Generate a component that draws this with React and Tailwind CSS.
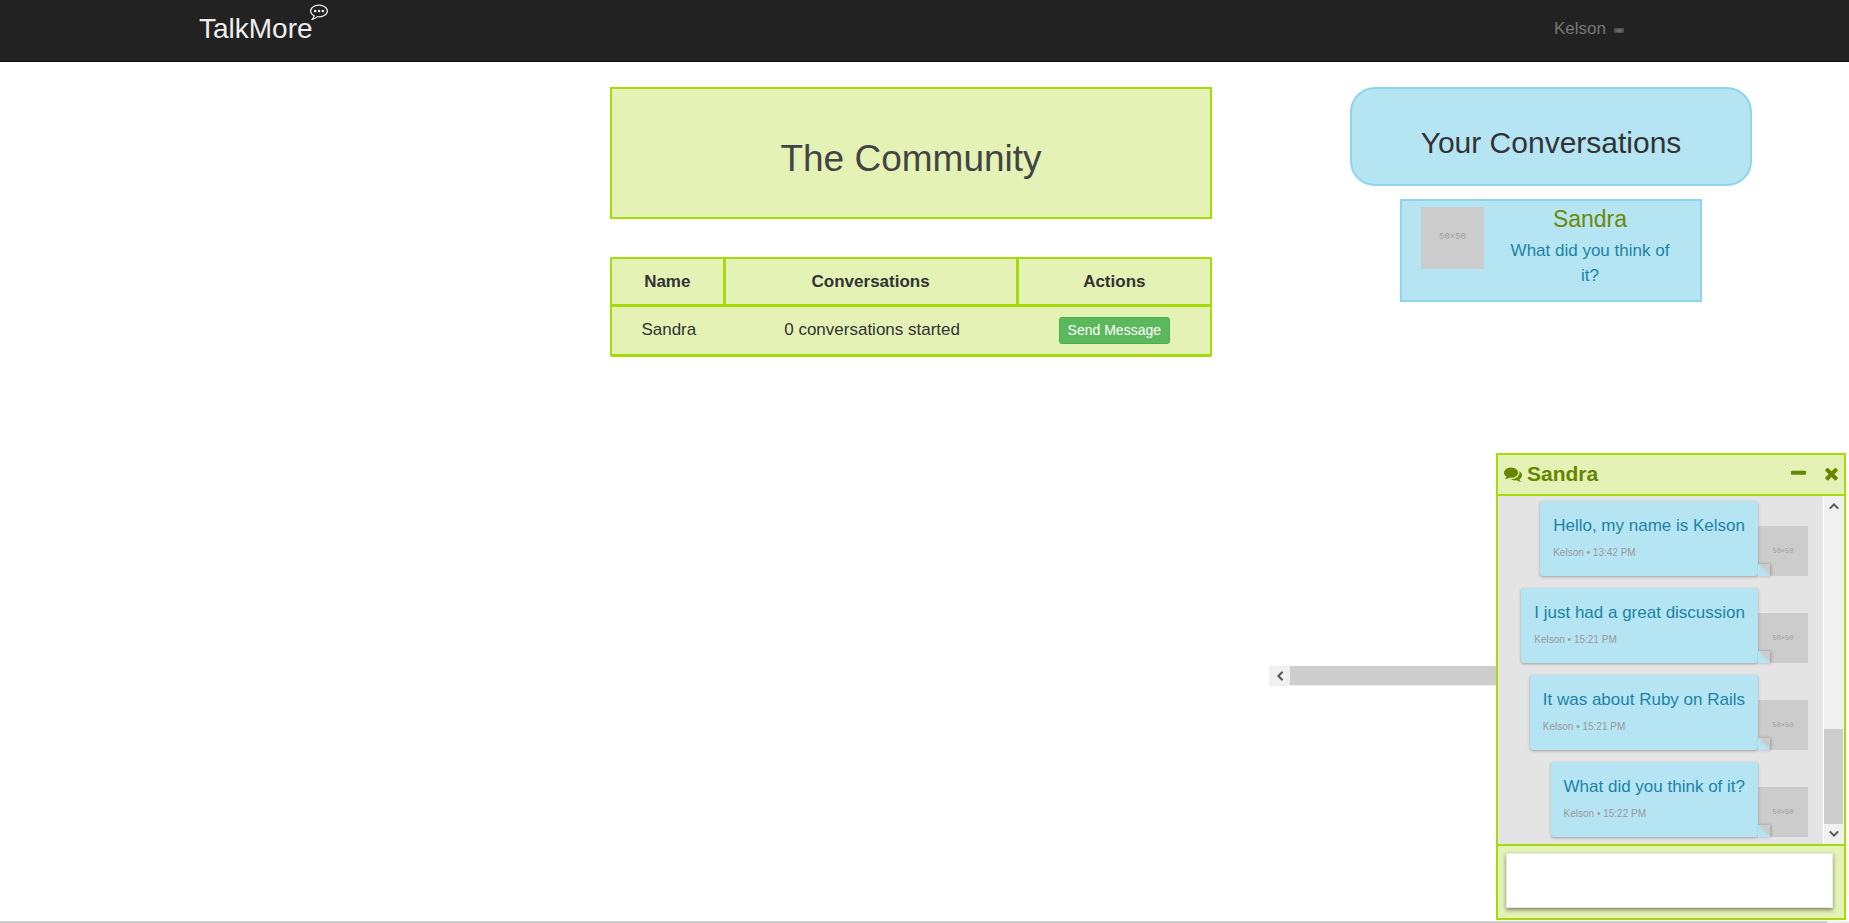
const messages = [
  { text: 'Hello, my name is Kelson', time: '13:42 PM' },
  { text: 'I just had a great discussion', time: '15:21 PM' },
  { text: 'It was about Ruby on Rails', time: '15:21 PM' },
  { text: 'What did you think of it?', time: '15:22 PM' },
];

function Icon({ d, className }) {
  return (
    <svg viewBox="0 0 1792 1792" fill="currentColor" className={className} aria-hidden="true">
      <path d={d} />
    </svg>
  );
}

const commentingPath =
  'M640 896q0 53-37.5 90.5t-90.5 37.5-90.5-37.5-37.5-90.5 37.5-90.5 90.5-37.5 90.5 37.5 37.5 90.5zm384 0q0 53-37.5 90.5t-90.5 37.5-90.5-37.5-37.5-90.5 37.5-90.5 90.5-37.5 90.5 37.5 37.5 90.5zm384 0q0 53-37.5 90.5t-90.5 37.5-90.5-37.5-37.5-90.5 37.5-90.5 90.5-37.5 90.5 37.5 37.5 90.5zm-512-512q-204 0-381.5 69.5t-282 187.5-104.5 255q0 112 71.5 213.5t201.5 175.5l87 50-27 96q-24 91-70 172 152-63 275-171l43-38 57 6q69 8 130 8 204 0 381.5-69.5t282-187.5 104.5-255-104.5-255-282-187.5-381.5-69.5zm896 512q0 174-120 321.5t-326 233-450 85.5q-70 0-145-8-198 175-460 242-49 14-114 22h-5q-15 0-27-10.5t-16-27.5v-1q-3-4-.5-12t2-10 4.5-9.5l6-9 7-8.5 8-9q7-8 31-34.5t34.5-38 31-39.5 32.5-51 27-59 26-76q-157-89-247.5-220t-90.5-281q0-174 120-321.5t326-233 450-85.5 450 85.5 326 233 120 321.5z';
const commentsPath =
  'M1408 768q0 139-94 257t-256.5 186.5-353.5 68.5q-86 0-176-16-124 88-278 128-36 9-86 16h-3q-11 0-20.5-8t-11.5-21q-1-3-1-6.5t.5-6.5 2-6l2.5-5 3.5-5.5 4-5 4.5-5 4-4.5q5-6 23-25t26-29.5 22.5-29 25-38.5 20.5-44q-124-72-195-177t-71-224q0-139 94-257t256.5-186.5 353.5-68.5 353.5 68.5 256.5 186.5 94 257zm384 256q0 120-71 224.5t-195 176.5q10 24 20.5 44t25 38.5 22.5 29 26 29.5 23 25q1 1 4 4.5t4.5 5 4 5 3.5 5.5l2.5 5 2 6 .5 6.5-1 6.5q-3 14-13 22t-22 7q-50-7-86-16-154-40-278-128-90 16-176 16-271 0-472-132 58 4 88 4 161 0 309-45t264-129q125-92 192-212t67-254q0-77-23-152 129 71 204 178t75 230z';
const minusPath =
  'M1600 736v192q0 40-28 68t-68 28h-1216q-40 0-68-28t-28-68v-192q0-40 28-68t68-28h1216q40 0 68 28t28 68z';
const timesPath =
  'M1490 1322q0 40-28 68l-136 136q-28 28-68 28t-68-28l-294-294-294 294q-28 28-68 28t-68-28l-136-136q-28-28-28-68t28-68l294-294-294-294q-28-28-28-68t28-68l136-136q28-28 68-28t68 28l294 294 294-294q28-28 68-28t68 28l136 136q28 28 28 68t-28 68l-294 294 294 294q28 28 28 68z';

function Chevron({ className }) {
  return (
    <svg viewBox="0 0 10 10" fill="none" stroke="#555555" strokeWidth="2" className={className} aria-hidden="true">
      <path d="M0.8 7.6 5 3.4 9.2 7.6" />
    </svg>
  );
}

function Navbar() {
  return (
    <header className="flex h-[62px] items-start justify-between border-b border-[#080808] bg-[#222222] pl-[199px] pr-[225px]">
      <a href="#" className="flex items-start text-[28px] leading-8 text-[#eeeeee]">
        <span className="pt-[13px]">TalkMore</span>
        <Icon d={commentingPath} className="mt-[2px] -ml-[3px] h-[18px] w-[18px]" />
      </a>
      <button type="button" className="flex items-center gap-2 pt-4 text-[17px] leading-[25px] text-[#777777]">
        Kelson
        <span className="mt-1 h-[5px] w-[10px] bg-[radial-gradient(ellipse_at_center,#777777,#3a3a3a)]" />
      </button>
    </header>
  );
}

function Community() {
  return (
    <main className="col-start-2 text-center">
      <h1 className="border-2 border-[#a6db0a] bg-[#e4f2b5] pt-[49px] pb-[37px] text-[37px] leading-[42px] text-[#444444]">
        The Community
      </h1>
      <table className="mt-[38px] w-full border-separate border-spacing-0 rounded-[2px] border-2 border-b-0 border-[#a6db0a] bg-[#e4f2b5] text-[17px] leading-[25px] text-[#333333]">
        <thead>
          <tr>
            <th className="w-[19%] border-r-[3px] border-b-[3px] border-[#a6db0a] py-[10px] font-bold">Name</th>
            <th className="w-[49%] border-r-[3px] border-b-[3px] border-[#a6db0a] py-[10px] font-bold">Conversations</th>
            <th className="border-b-[3px] border-[#a6db0a] py-[10px] font-bold">Actions</th>
          </tr>
        </thead>
        <tbody>
          <tr className="align-top">
            <td className="border-b-[3px] border-[#a6db0a] py-[10px]">Sandra</td>
            <td className="border-b-[3px] border-[#a6db0a] py-[10px]">0 conversations started</td>
            <td className="border-b-[3px] border-[#a6db0a] py-[10px]">
              <div className="flex justify-center">
                <button
                  type="button"
                  className="rounded-[3px] border border-[#4cae4c] bg-[#5cb85c] px-2 py-[2px] text-[14px] leading-[21px] text-white"
                >
                  Send Message
                </button>
              </div>
            </td>
          </tr>
        </tbody>
      </table>
    </main>
  );
}

function Conversations() {
  return (
    <aside className="col-start-4 text-center">
      <h2 className="rounded-[25px] border-2 border-[#8dd5eb] bg-[#b5e5f3] pt-[37px] pb-[24px] text-[30px] leading-[34px] text-[#333333]">
        Your Conversations
      </h2>
      <a
        href="#"
        className="mx-[50px] mt-[13px] flex gap-[15px] border-2 border-[#8dd5eb] bg-[#b5e5f3] px-[19px] pt-[6px] pb-[12px]"
      >
        <span className="flex h-[62px] w-[63px] shrink-0 items-center justify-center bg-[#cccccc] font-['Liberation_Mono',monospace] text-[9px] text-[#a0a0a0]">
          50×50
        </span>
        <span className="flex-1">
          <span className="block pb-[7px] text-[23px] leading-[24px] text-[#6b8a07]">Sandra</span>
          <span className="block px-2 text-[17px] leading-[25px] text-[#1c83a6]">What did you think of it?</span>
        </span>
      </a>
    </aside>
  );
}

function Message({ text, time }) {
  return (
    <li className="flex items-end justify-end">
      <div className="relative rounded-[3px] bg-[#b5e5f3] px-[13px] pt-[12px] pb-[13px] shadow-[0_1px_3px_rgba(0,0,0,0.3)]">
        <p className="text-[17px] leading-[25px] text-[#1c83a6]">{text}</p>
        <p className="pt-[5px] text-[10px] leading-5 text-[#999999]">Kelson • {time}</p>
        <span className="absolute bottom-0 left-full h-3 w-3 bg-[linear-gradient(45deg,#b5e5f3_40%,#cccccc_62%)] shadow-[1px_0_3px_rgba(0,0,0,0.25)]" />
      </div>
      <span className="flex h-[50px] w-[50px] items-center justify-center bg-[#cccccc] font-['Liberation_Mono',monospace] text-[7px] text-[#a0a0a0]">
        50×50
      </span>
    </li>
  );
}

function ChatWindow() {
  return (
    <section className="fixed right-[3px] bottom-[3px] flex w-[350px] flex-col border-2 border-[#a6db0a] bg-[#e4f2b5]">
      <header className="flex h-[41px] items-center border-b-2 border-[#a6db0a] pr-[3px] pb-[2px] pl-[6px] text-[#668500]">
        <Icon d={commentsPath} className="h-[18px] w-[18px]" />
        <h3 className="flex-1 pl-[5px] text-[21px] leading-6 font-bold">Sandra</h3>
        <button type="button" aria-label="Minimize" className="mr-[14px]">
          <Icon d={minusPath} className="h-[19px] w-[19px]" />
        </button>
        <button type="button" aria-label="Close">
          <Icon d={timesPath} className="h-[19px] w-[19px]" />
        </button>
      </header>
      <div className="flex h-[348px]">
        <ul className="flex flex-1 flex-col gap-3 bg-[#e4e4e4] pt-[5px] pr-[15px]">
          {messages.map((message) => (
            <Message key={message.text} text={message.text} time={message.time} />
          ))}
        </ul>
        <div className="flex w-[21px] flex-col items-center border-x border-l-white border-r-[#f8f8f8] bg-[#f0f0f0]">
          <Chevron className="my-[5px] h-[10px] w-[10px]" />
          <div className="mt-auto h-[95px] w-full bg-[#cdcdcd]" />
          <Chevron className="my-[5px] h-[10px] w-[10px] rotate-180" />
        </div>
      </div>
      <div className="border-t-2 border-[#a6db0a] pt-[7px] pr-[11px] pb-[10px] pl-2">
        <textarea
          aria-label="Message"
          className="block h-[55px] w-full resize-none border border-[#e8e8e8] bg-white p-2 text-[17px] shadow-[0_2px_4px_rgba(0,0,0,0.45)] outline-none"
        />
      </div>
    </section>
  );
}

export default function App() {
  return (
    <div className="min-h-screen bg-white font-['Liberation_Sans',Arial,sans-serif]">
      <Navbar />
      <div className="grid grid-cols-[610fr_602fr_138fr_402fr_97fr] pt-[25px]">
        <Community />
        <Conversations />
      </div>
      <div className="fixed right-[353px] bottom-[237px] flex h-5 w-[227px] bg-[#f0f0f0]">
        <div className="flex w-[21px] items-center justify-center">
          <Chevron className="h-[10px] w-[10px] -rotate-90" />
        </div>
        <div className="mb-px flex-1 bg-[#cdcdcd]" />
      </div>
      <ChatWindow />
      <div className="fixed inset-x-0 bottom-0 h-[2px] bg-[#f0f0f0] pr-[22px]">
        <div className="h-full bg-[#cdcdcd]" />
      </div>
    </div>
  );
}
